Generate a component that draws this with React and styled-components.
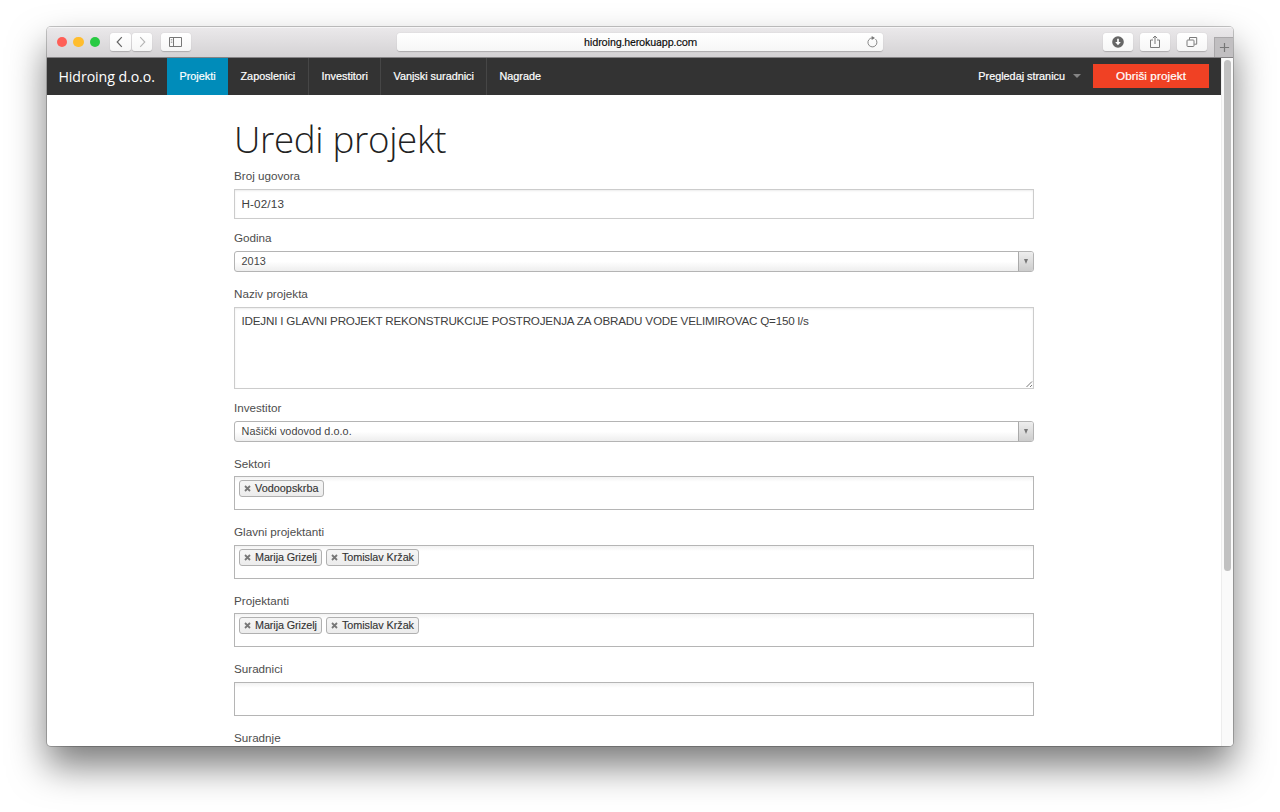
import React from "react";
import styled, { createGlobalStyle } from "styled-components";

const Global = createGlobalStyle`
  * { box-sizing: border-box; }
  html, body { margin: 0; height: 812px; overflow: hidden; background: #fff; }
  body { font-family: "Liberation Sans", Arial, sans-serif; font-size: 11.67px; }
  button, input, textarea { font-family: inherit; }
`;

const Desktop = styled.main`
  width: 1280px;
  height: 812px;
  padding: 27px 47px 66px;
`;

const BrowserWindow = styled.section`
  display: flex;
  flex-direction: column;
  width: 1186px;
  height: 719px;
  overflow: hidden;
  border-radius: 4px;
  background: #fff;
  box-shadow: 0 0 0 1px rgba(0, 0, 0, 0.22), 0 20px 37px rgba(0, 0, 0, 0.52);
`;

const Toolbar = styled.header`
  display: grid;
  grid-template-columns: 350px 486px 1fr;
  height: 31px;
  flex: none;
  border-bottom: 1px solid #858385;
  background: linear-gradient(#ebe9eb, #d4d2d4);
  box-shadow: inset 0 1px #f6f5f6;
`;

const ToolGroup = styled.div`
  display: flex;
  padding-top: 6px;
  justify-content: ${(p) => (p.$end ? "flex-end" : "flex-start")};
`;

const Lights = styled.div`
  display: flex;
  gap: 6px;
  padding: 3.5px 10px 0 9.5px;
`;

const Light = styled.span`
  width: 10.5px;
  height: 10.5px;
  border-radius: 50%;
  background: ${(p) => p.$color};
`;

const ToolButton = styled.button`
  display: flex;
  align-items: center;
  justify-content: center;
  width: ${(p) => p.$width}px;
  height: 18px;
  padding: 0;
  margin-right: ${(p) => p.$gap}px;
  border: 0;
  border-radius: 3px;
  background: linear-gradient(#fff, #f6f6f6);
  box-shadow: 0 0.5px 1px rgba(0, 0, 0, 0.2);
  color: ${(p) => p.$color || "#666"};
`;

const Address = styled.div`
  display: grid;
  grid-template-columns: 1fr auto 1fr;
  align-items: center;
  height: 18px;
  margin-top: 6px;
  padding: 0 5px 0 6px;
  border-radius: 3px;
  background: linear-gradient(#fff, #f6f6f6);
  box-shadow: 0 0.5px 1px rgba(0, 0, 0, 0.2);
  color: #111;
  font: 10.8px Roboto, sans-serif;
  letter-spacing: -0.18px;
  -webkit-text-stroke: 0.15px #111;

  svg { justify-self: end; }
`;

const NewTab = styled.button`
  display: flex;
  align-items: center;
  justify-content: center;
  width: 19px;
  height: 20px;
  margin-top: 4px;
  padding: 0;
  border: 1px solid #aaa8aa;
  border-width: 1px 0 0 1px;
  background: #c1bfc1;
  color: #777;
`;

const Viewport = styled.div`
  display: flex;
  flex: 1;
  min-height: 0;
`;

const Page = styled.div`
  width: 1174px;
  overflow: hidden;
`;

const Nav = styled.nav`
  display: flex;
  height: 37px;
  background: #333;
  color: #fff;
`;

const Brand = styled.div`
  width: 120px;
  padding-left: 11.5px;
  font: 14.2px/37px "Open Sans", sans-serif;
  letter-spacing: -0.09px;
  white-space: nowrap;
`;

const NavItem = styled.a`
  width: ${(p) => p.$width}px;
  padding-left: 12.5px;
  border-right: 1px solid ${(p) => (p.$last || p.$active ? "transparent" : "#464646")};
  background: ${(p) => (p.$active ? "#008cba" : "transparent")};
  font-size: 10.83px;
  line-height: 37px;
  white-space: nowrap;
  -webkit-text-stroke: 0.2px #fff;
`;

const NavActions = styled.div`
  display: flex;
  align-items: center;
  margin-left: auto;
  padding-right: 12px;
`;

const PageMenu = styled.a`
  display: flex;
  align-items: center;
  gap: 8px;
  padding: 0 12px 2px 0;
  font-size: 10.83px;
  -webkit-text-stroke: 0.2px #fff;
`;

const Caret = styled.i`
  border: 4px solid transparent;
  border-top-color: #858585;
  border-bottom: 0;
`;

const DeleteButton = styled.button`
  width: 116px;
  height: 24px;
  margin-bottom: 1px;
  padding: 0 0 1px;
  border: 0;
  background: #f04124;
  color: #fff;
  font-size: 11.67px;
  letter-spacing: 0.1px;
  -webkit-text-stroke: 0.2px #fff;
`;

const Form = styled.form`
  width: 800px;
  margin-left: 187px;
  padding-top: 17px;
`;

const Title = styled.h1`
  height: 55px;
  margin: 0;
  color: #222;
  font: 300 36.7px/54px "Open Sans", sans-serif;
  letter-spacing: -0.33px;
`;

const Field = styled.div`
  height: ${(p) => p.$height}px;
`;

const Label = styled.label`
  display: block;
  height: ${(p) => p.$height || 22}px;
  color: #4d4d4d;
  font-size: 11.67px;
  line-height: 18px;
`;

const TextInput = styled.input`
  display: block;
  width: 100%;
  height: 30px;
  padding: 0 6.5px 1px;
  border: 1px solid #ccc;
  background: #fff;
  box-shadow: inset 0 1px 2px rgba(0, 0, 0, 0.08);
  color: #404040;
  font-size: 11.67px;
  letter-spacing: 0.15px;
`;

const TextArea = styled.textarea`
  display: block;
  width: 100%;
  height: 82px;
  padding: 5px 6.5px;
  border: 1px solid #ccc;
  box-shadow: inset 0 1px 2px rgba(0, 0, 0, 0.08);
  color: #404040;
  font-size: 11.67px;
  line-height: 15px;
  letter-spacing: -0.2px;
  resize: none;
`;

const AreaFrame = styled.div`
  position: relative;
  svg { position: absolute; right: 1px; bottom: 1px; }
`;

const Select = styled.div`
  display: flex;
  justify-content: space-between;
  height: 21px;
  overflow: hidden;
  border: 1px solid #b4b4b4;
  border-radius: 3px;
  background: linear-gradient(#fff 50%, #eee);
  color: #444;
  font-size: 10.83px;
  line-height: 19px;
  letter-spacing: 0.06px;

  > span { padding-left: 6.5px; }
`;

const SelectArrow = styled.i`
  display: flex;
  align-items: center;
  justify-content: center;
  width: 15px;
  border-left: 1px solid #aaa;
  background: linear-gradient(#eee, #ccc);

  &::after {
    content: "";
    border: 2.5px solid transparent;
    border-top: 5px solid #777;
    border-bottom: 0;
  }
`;

const MultiSelect = styled.div`
  display: flex;
  gap: 4px;
  height: 34px;
  padding: 3px 4px;
  border: 1px solid #b5b5b5;
  background: linear-gradient(#f2f2f2, #fff 5px);
`;

const Tag = styled.span`
  display: flex;
  align-items: center;
  gap: 4px;
  width: ${(p) => p.$width}px;
  height: 17px;
  padding: 0 0 1px 4px;
  border: 1px solid #b0b0b0;
  border-radius: 3px;
  background: linear-gradient(#f4f4f4 20%, #ececec);
  color: #333;
  font-size: 10.83px;
  letter-spacing: ${(p) => p.$track || 0}px;
  white-space: nowrap;
  -webkit-text-stroke: 0.12px #333;

  svg { position: relative; top: 0.5px; }
`;

const ScrollRail = styled.div`
  width: 12px;
  padding: 2px 1px 0 2px;
  border-left: 1px solid #ededed;
  background: #fafafa;
`;

const ScrollThumb = styled.div`
  width: 7px;
  height: 511px;
  border-radius: 4px;
  background: #c1c1c1;
`;

const Icon = ({ size = 12, children }) => (
  <svg width={size} height={size} viewBox="0 0 12 12" fill="none" stroke="currentColor" strokeWidth="1">
    {children}
  </svg>
);

const Remove = () => (
  <svg width="7" height="7" viewBox="0 0 7 7" stroke="#777" strokeWidth="1.8">
    <path d="M1 1l5 5M6 1L1 6" />
  </svg>
);

const navItems = [
  { name: "Projekti", width: 61, active: true },
  { name: "Zaposlenici", width: 81 },
  { name: "Investitori", width: 72 },
  { name: "Vanjski suradnici", width: 106 },
  { name: "Nagrade", width: 70, last: true },
];

const people = [
  { name: "Marija Grizelj", width: 83, track: -0.1 },
  { name: "Tomislav Kržak", width: 93, track: -0.06 },
];

const tagFields = [
  { label: "Sektori", tags: [{ name: "Vodoopskrba", width: 85, track: 0.03 }] },
  { label: "Glavni projektanti", tags: people },
  { label: "Projektanti", tags: people },
  { label: "Suradnici", tags: [] },
];

export default function App() {
  return (
    <>
      <Global />
      <Desktop>
        <BrowserWindow>
          <Toolbar>
            <ToolGroup>
              <Lights>
                <Light $color="#ff5f57" />
                <Light $color="#ffbd2e" />
                <Light $color="#28ca42" />
              </Lights>
              <ToolButton $width={20.5} $gap={1.5} aria-label="Back">
                <Icon><path d="M7.8 1.2L3.2 6l4.6 4.8" strokeWidth="1.2" /></Icon>
              </ToolButton>
              <ToolButton $width={20} $gap={8.5} $color="#b5b5b5" aria-label="Forward">
                <Icon><path d="M4.2 1.2L8.8 6l-4.6 4.8" strokeWidth="1.1" /></Icon>
              </ToolButton>
              <ToolButton $width={30} $gap={0} aria-label="Sidebar">
                <svg width="13" height="10" viewBox="0 0 13 10" fill="none" stroke="#777">
                  <path d="M.5.5h12v9H.5zM4.5.5v9" />
                  <path d="M1.8 2.5h1.5M1.8 4h1.5M1.8 5.5h1.5" strokeWidth=".6" />
                </svg>
              </ToolButton>
            </ToolGroup>
            <Address>
              <span />
              <span>hidroing.herokuapp.com</span>
              <Icon>
                <path d="M9.5 3.1A4.5 4.5 0 1 1 6.2 1.9" stroke="#888" />
                <path d="M5.7 0v3.9L9 1.9z" fill="#777" stroke="none" />
              </Icon>
            </Address>
            <ToolGroup $end>
              <ToolButton $width={30} $gap={7} aria-label="Downloads">
                <Icon>
                  <circle cx="6" cy="6" r="5.8" fill="#666" stroke="none" />
                  <path d="M6 2.7v4" stroke="#fff" strokeWidth="1.7" />
                  <path d="M3.2 6h5.6L6 9.2z" fill="#fff" stroke="none" />
                </Icon>
              </ToolButton>
              <ToolButton $width={30} $gap={7} $color="#7b7b7b" aria-label="Share">
                <svg width="12" height="14" viewBox="0 0 12 14" fill="none" stroke="currentColor">
                  <path d="M4 5H1.5v7.5h9V5H8M6 9V1M3.8 3.2L6 1l2.2 2.2" />
                </svg>
              </ToolButton>
              <ToolButton $width={30} $gap={7} $color="#7b7b7b" aria-label="Tabs">
                <Icon>
                  <rect x="1" y="4" width="7" height="6.5" rx=".8" />
                  <path d="M3.5 3.8V1.5h7.2v6.7H8.3" />
                </Icon>
              </ToolButton>
              <NewTab aria-label="New tab">
                <Icon size={11}><path d="M6 1v10M1 6h10" strokeWidth="1.3" /></Icon>
              </NewTab>
            </ToolGroup>
          </Toolbar>
          <Viewport>
            <Page>
              <Nav>
                <Brand>Hidroing d.o.o.</Brand>
                {navItems.map((item) => (
                  <NavItem key={item.name} $width={item.width} $active={item.active} $last={item.last}>
                    {item.name}
                  </NavItem>
                ))}
                <NavActions>
                  <PageMenu>Pregledaj stranicu <Caret /></PageMenu>
                  <DeleteButton type="button">Obriši projekt</DeleteButton>
                </NavActions>
              </Nav>
              <Form>
                <Title>Uredi projekt</Title>
                <Field $height={62}>
                  <Label>Broj ugovora</Label>
                  <TextInput defaultValue="H-02/13" />
                </Field>
                <Field $height={56}>
                  <Label>Godina</Label>
                  <Select><span>2013</span><SelectArrow /></Select>
                </Field>
                <Field $height={114}>
                  <Label>Naziv projekta</Label>
                  <AreaFrame>
                    <TextArea defaultValue="IDEJNI I GLAVNI PROJEKT REKONSTRUKCIJE POSTROJENJA ZA OBRADU VODE VELIMIROVAC Q=150 l/s" />
                    <svg width="7" height="7" viewBox="0 0 7 7" stroke="#777">
                      <path d="M.5 6L6 .5M4 6l2-2" />
                    </svg>
                  </AreaFrame>
                </Field>
                <Field $height={56}>
                  <Label>Investitor</Label>
                  <Select><span>Našički vodovod d.o.o.</span><SelectArrow /></Select>
                </Field>
                {tagFields.map((field) => (
                  <Field key={field.label} $height={68.4}>
                    <Label $height={21.4}>{field.label}</Label>
                    <MultiSelect>
                      {field.tags.map((tag) => (
                        <Tag key={tag.name} $width={tag.width} $track={tag.track}>
                          <Remove />{tag.name}
                        </Tag>
                      ))}
                    </MultiSelect>
                  </Field>
                ))}
                <Label>Suradnje</Label>
              </Form>
            </Page>
            <ScrollRail><ScrollThumb /></ScrollRail>
          </Viewport>
        </BrowserWindow>
      </Desktop>
    </>
  );
}
